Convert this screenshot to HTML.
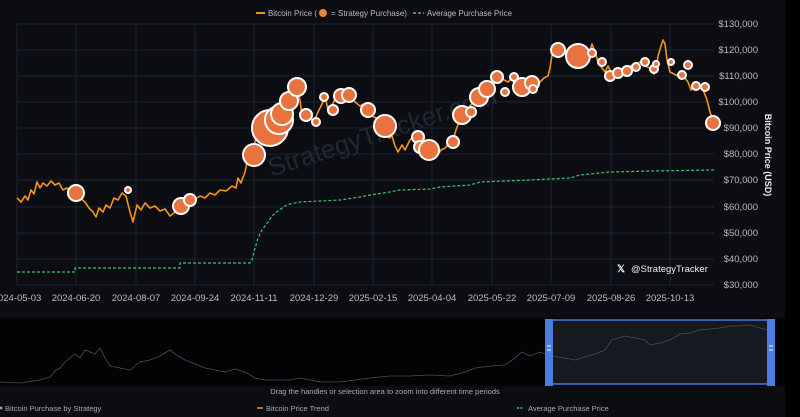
<!DOCTYPE html>
<html><head><meta charset="utf-8"><style>
html,body{margin:0;padding:0;background:#0b0d13;width:800px;height:417px;overflow:hidden;font-family:"Liberation Sans",sans-serif}
</style></head><body>
<svg width="800" height="417" viewBox="0 0 800 417" xmlns="http://www.w3.org/2000/svg" font-family="Liberation Sans, sans-serif">
<rect width="800" height="417" fill="#0b0d13"/>
<rect x="785" y="0" width="15" height="417" fill="#000"/>
<g stroke="#1e222c" stroke-width="1">
<line x1="17" y1="24" x2="714" y2="24"/><line x1="17" y1="50" x2="714" y2="50"/><line x1="17" y1="76" x2="714" y2="76"/><line x1="17" y1="102" x2="714" y2="102"/><line x1="17" y1="128" x2="714" y2="128"/><line x1="17" y1="154" x2="714" y2="154"/><line x1="17" y1="180" x2="714" y2="180"/><line x1="17" y1="207" x2="714" y2="207"/><line x1="17" y1="233" x2="714" y2="233"/><line x1="17" y1="259" x2="714" y2="259"/><line x1="17" y1="285" x2="714" y2="285"/>
<line x1="17" y1="24" x2="17" y2="285"/><line x1="76" y1="24" x2="76" y2="285"/><line x1="136" y1="24" x2="136" y2="285"/><line x1="195" y1="24" x2="195" y2="285"/><line x1="254" y1="24" x2="254" y2="285"/><line x1="314" y1="24" x2="314" y2="285"/><line x1="373" y1="24" x2="373" y2="285"/><line x1="432" y1="24" x2="432" y2="285"/><line x1="492" y1="24" x2="492" y2="285"/><line x1="551" y1="24" x2="551" y2="285"/><line x1="611" y1="24" x2="611" y2="285"/><line x1="670" y1="24" x2="670" y2="285"/>
</g>
<text x="385" y="140" fill="#23272f" font-size="26" text-anchor="middle" transform="rotate(-18 385 140)">StrategyTracker.com</text>
<line x1="256" y1="13" x2="265" y2="13" stroke="#f7931a" stroke-width="2"/>
<text x="268" y="16" fill="#bbb" font-size="8.5" textLength="49" lengthAdjust="spacingAndGlyphs">Bitcoin Price (</text>
<circle cx="323" cy="13" r="4" fill="#e8833a"/>
<text x="331" y="16" fill="#bbb" font-size="8.5" textLength="76" lengthAdjust="spacingAndGlyphs">= Strategy Purchase)</text>
<line x1="413" y1="13" x2="424" y2="13" stroke="#3ec46d" stroke-width="1.5" stroke-dasharray="3,2"/>
<text x="427" y="16" fill="#bbb" font-size="8.5" textLength="85" lengthAdjust="spacingAndGlyphs">Average Purchase Price</text>
<polyline fill="none" stroke="#3ec46d" stroke-width="1.2" stroke-dasharray="3,2" points="17,272 75,272 75,268 180,268 180,263 250,263 252,260 254,252 256,245 258,238 262,230 268,222 272,216 278,211 285,206 290,204 300,202 320,201 340,200 360,197 370,195 390,192 400,190 430,189 440,187 470,185 480,182 530,180 570,178 580,175 610,172 650,171 714,170"/>
<polyline fill="none" stroke="#f7931a" stroke-width="1.6" stroke-linejoin="round" points="17,198 21,202 25,196 28,200 31,190 34,194 37,182 40,188 43,183 47,186 51,181 55,185 59,183 63,190 67,188 72,193 76,194 80,198 85,202 89,208 93,212 96,217 99,208 103,212 106,205 110,208 114,198 118,200 122,193 126,196 130,212 133,222 137,205 141,210 145,203 150,208 155,206 160,211 165,209 170,216 175,212 180,206 185,204 190,200 195,199 200,196 205,198 210,193 215,195 220,190 226,191 232,186 236,188 238,178 241,183 245,172 248,158 251,152 255,142 260,130 265,126 270,122 276,118 282,112 288,103 293,100 297,88 300,100 302,116 306,120 310,114 313,124 318,112 322,104 325,96 328,110 332,105 336,98 340,95 345,97 350,96 355,102 360,106 364,104 368,112 372,116 376,118 380,124 385,128 389,138 392,136 395,146 398,152 402,145 405,150 410,140 414,136 418,142 422,148 426,144 430,150 434,153 437,156 441,150 445,148 449,144 453,140 456,130 459,122 462,117 466,112 470,106 475,100 480,94 485,88 490,84 495,78 500,76 504,80 508,82 512,78 516,86 520,90 524,86 528,82 532,86 536,90 540,82 544,78 548,76 550,68 552,55 556,50 560,48 565,52 570,54 574,56 578,58 582,56 585,62 588,58 592,44 595,52 598,62 602,68 605,72 608,66 612,74 616,73 620,70 625,68 630,66 635,64 640,62 645,66 650,68 654,74 656,70 658,56 661,46 663,40 665,44 667,60 670,72 674,74 678,76 682,74 685,78 688,82 691,90 695,84 698,88 701,86 704,92 707,100 710,112 714,122"/>
<g fill="#e8733f" stroke="#fff" stroke-width="2">
<circle cx="76" cy="193" r="8"/><circle cx="128" cy="190" r="3"/><circle cx="181" cy="206" r="8"/><circle cx="190" cy="200" r="6"/>
<circle cx="254" cy="155" r="11"/><circle cx="270" cy="128" r="18"/><circle cx="279" cy="120" r="14"/><circle cx="282" cy="114" r="11"/><circle cx="289" cy="101" r="9"/><circle cx="297" cy="87" r="9"/>
<circle cx="306" cy="115" r="6"/><circle cx="316" cy="122" r="4"/><circle cx="324" cy="97" r="4"/><circle cx="333" cy="110" r="5"/><circle cx="341" cy="96" r="7"/><circle cx="349" cy="95" r="7"/><circle cx="368" cy="110" r="7"/><circle cx="385" cy="126" r="11"/>
<circle cx="418" cy="137" r="6"/><circle cx="420" cy="147" r="6"/><circle cx="429" cy="150" r="10"/><circle cx="453" cy="142" r="6"/><circle cx="462" cy="115" r="9"/><circle cx="471" cy="112" r="5"/><circle cx="479" cy="97" r="9"/><circle cx="487" cy="89" r="8"/><circle cx="497" cy="77" r="6"/><circle cx="505" cy="92" r="4"/><circle cx="514" cy="77" r="4"/><circle cx="522" cy="87" r="9"/><circle cx="532" cy="83" r="7"/><circle cx="533" cy="89" r="4"/>
<circle cx="558" cy="50" r="7"/><circle cx="578" cy="56" r="12"/><circle cx="592" cy="53" r="4"/><circle cx="602" cy="62" r="4"/><circle cx="610" cy="76" r="5"/><circle cx="618" cy="73" r="5"/><circle cx="627" cy="71" r="5"/><circle cx="636" cy="67" r="4"/><circle cx="645" cy="62" r="4"/><circle cx="654" cy="69" r="4"/><circle cx="656" cy="64" r="3"/><circle cx="671" cy="62" r="3"/><circle cx="682" cy="75" r="4"/><circle cx="688" cy="65" r="4"/><circle cx="696" cy="86" r="4"/><circle cx="705" cy="87" r="4"/><circle cx="713" cy="123" r="7"/>
</g>
<g fill="#bbb" font-size="9.5" text-anchor="end">
<text x="758" y="27">$130,000</text><text x="758" y="53">$120,000</text><text x="758" y="79">$110,000</text><text x="758" y="105">$100,000</text><text x="758" y="131">$90,000</text><text x="758" y="157">$80,000</text><text x="758" y="183">$70,000</text><text x="758" y="210">$60,000</text><text x="758" y="236">$50,000</text><text x="758" y="262">$40,000</text><text x="758" y="288">$30,000</text>
</g>
<text x="765" y="155" fill="#eee" font-size="9" font-weight="bold" text-anchor="middle" transform="rotate(90 765 155)">Bitcoin Price (USD)</text>
<g fill="#bbb" font-size="9.5" text-anchor="middle">
<text x="17" y="301">2024-05-03</text><text x="76" y="301">2024-06-20</text><text x="136" y="301">2024-08-07</text><text x="195" y="301">2024-09-24</text><text x="254" y="301">2024-11-11</text><text x="314" y="301">2024-12-29</text><text x="373" y="301">2025-02-15</text><text x="432" y="301">2025-04-04</text><text x="492" y="301">2025-05-22</text><text x="551" y="301">2025-07-09</text><text x="611" y="301">2025-08-26</text><text x="670" y="301">2025-10-13</text>
</g>
<text x="617" y="272" fill="#eee" font-size="10" font-weight="bold">𝕏</text>
<text x="631" y="272" fill="#eee" font-size="9.5">@StrategyTracker</text>
<rect x="0" y="318" width="785" height="68" fill="#020304"/>
<rect x="549" y="320" width="221" height="64" fill="#161920"/>
<polyline fill="none" stroke="#4a4e58" stroke-width="0.8" points="0,382 20,383 40,380 50,377 56,370 60,368 65,362 75,354 80,358 85,350 95,354 100,348 105,358 110,366 120,368 130,370 140,362 150,360 160,356 170,350 178,356 185,360 195,364 205,368 215,370 225,372 235,369 245,372 255,378 265,380 275,380 290,380 300,378 320,382 340,382 355,380 370,378 390,376 410,376 430,375 450,376 465,372 475,368 490,366 505,365 515,358 522,352 530,356 540,352 550,356 565,358 575,360 585,357 595,354 605,350 612,340 618,338 625,336 635,338 645,340 650,345 660,343 670,340 680,334 690,333 700,330 710,329 720,328 730,326 740,326 750,325 760,328 768,330"/>
<rect x="549" y="320" width="221" height="64" fill="none" stroke="#4a7be0" stroke-width="1.5"/>
<rect x="545" y="319" width="8" height="67" fill="#4a7be0"/>
<rect x="767" y="319" width="8" height="67" fill="#4a7be0"/>
<g stroke="#fff" stroke-width="1"><line x1="547" y1="346" x2="551" y2="346"/><line x1="547" y1="350" x2="551" y2="350"/><line x1="769" y1="346" x2="773" y2="346"/><line x1="769" y1="350" x2="773" y2="350"/></g>
<text x="385" y="394" fill="#aaa" font-size="7.5" text-anchor="middle">Drag the handles or selection area to zoom into different time periods</text>
<circle cx="1" cy="408" r="1.5" fill="#999"/>
<text x="5" y="411" fill="#aaa" font-size="7.5">Bitcoin Purchase by Strategy</text>
<line x1="257" y1="408" x2="263" y2="408" stroke="#f7931a" stroke-width="1.5"/>
<text x="266" y="411" fill="#aaa" font-size="7.5">Bitcoin Price Trend</text>
<line x1="517" y1="408" x2="524" y2="408" stroke="#3ec46d" stroke-width="1.5" stroke-dasharray="2,1.5"/>
<text x="528" y="411" fill="#aaa" font-size="7.5">Average Purchase Price</text>
</svg>
</body></html>
